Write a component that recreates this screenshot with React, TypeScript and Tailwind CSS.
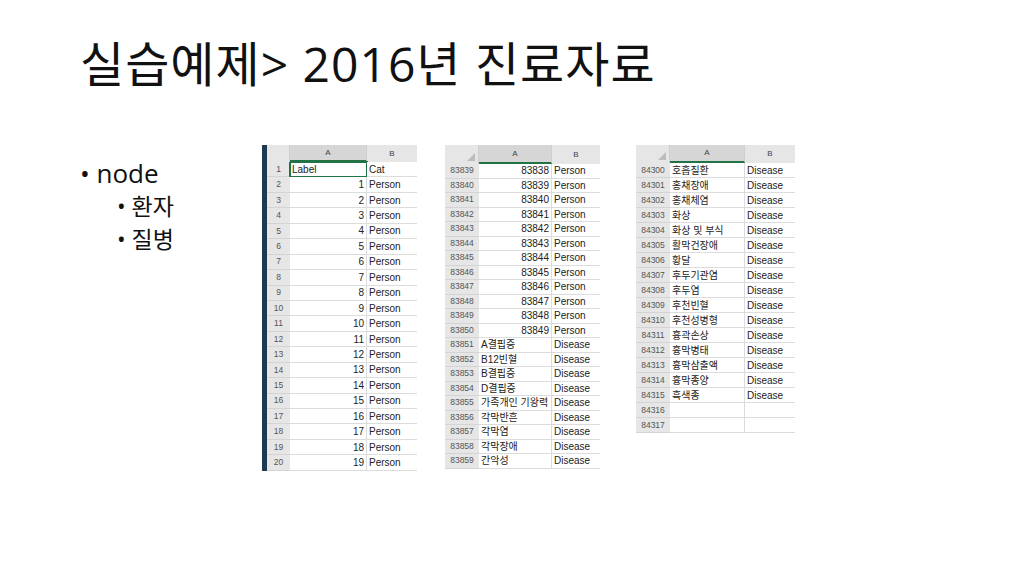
const font = { fontFamily: '"Open Sans", "Noto Sans CJK KR", sans-serif' };

type Row = [string, string, string];

function Sheet({
  rows, wNum, wA, wB, rowH, headH, bar = false, alignA = "right", corner = true, hlFirst = false,
}: {
  rows: Row[]; wNum: number; wA: number; wB: number; rowH: number; headH: number;
  bar?: boolean; alignA?: "right" | "left"; corner?: boolean; hlFirst?: boolean;
}) {
  return (
    <div className="flex" style={{ fontFamily: '"Liberation Sans", "Noto Sans CJK KR", sans-serif' }}>
      {bar && <div className="w-[5px] bg-[#1e3a52]" />}
      <div className="flex flex-col">
        <div className="flex bg-[#e6e6e6] text-[8px] text-[#444]" style={{ height: headH }}>
          <div className="relative border-r border-[#cfcfcf]" style={{ width: wNum }}>
            {corner && (
              <div className="absolute right-[3px] bottom-[3px] w-0 h-0 border-l-[8px] border-l-transparent border-b-[8px] border-b-[#bdbdbd]" />
            )}
          </div>
          <div className="flex items-center justify-center bg-[#d6d6d6] border-b-2 border-[#217346] border-r border-r-[#cfcfcf]" style={{ width: wA }}>A</div>
          <div className="flex items-center justify-center" style={{ width: wB }}>B</div>
        </div>
        {rows.map((r, i) => (
          <div key={i} className="flex text-[10px] text-[#222]" style={{ height: rowH }}>
            <div className="flex items-center justify-center bg-[#e6e6e6] text-[8.5px] text-[#555] border-b border-[#d4d4d4]" style={{ width: wNum }}>{r[0]}</div>
            <div
              className={`flex items-center px-[2px] border-b border-r border-[#dcdcdc] bg-white whitespace-nowrap ${alignA === "right" && /^\d+$/.test(r[1]) ? "justify-end" : "justify-start"} ${hlFirst && i === 0 ? "outline-2 outline-[#217346] -outline-offset-1" : ""}`}
              style={{ width: wA }}
            >{r[1]}</div>
            <div className="flex items-center px-[2px] border-b border-[#dcdcdc] bg-white" style={{ width: wB }}>{r[2]}</div>
          </div>
        ))}
      </div>
    </div>
  );
}

const s1: Row[] = [["1", "Label", "Cat"], ...Array.from({ length: 19 }, (_, i) => [String(i + 2), String(i + 1), "Person"] as Row)];
const s2: Row[] = [
  ...Array.from({ length: 12 }, (_, i) => [String(83839 + i), String(83838 + i), "Person"] as Row),
  ["83851", "A결핍증", "Disease"], ["83852", "B12빈혈", "Disease"], ["83853", "B결핍증", "Disease"],
  ["83854", "D결핍증", "Disease"], ["83855", "가족개인 기왕력", "Disease"], ["83856", "각막반흔", "Disease"],
  ["83857", "각막염", "Disease"], ["83858", "각막장애", "Disease"], ["83859", "간악성", "Disease"],
];
const names3 = ["호흡질환", "홍채장애", "홍채체염", "화상", "화상 및 부식", "활막건장애", "황달", "후두기관염", "후두염", "후천빈혈", "후천성병형", "흉곽손상", "흉막병태", "흉막삼출액", "흉막종양", "흑색종"];
const s3: Row[] = [
  ...names3.map((n, i) => [String(84300 + i), n, "Disease"] as Row),
  ["84316", "", ""], ["84317", "", ""],
];

export default function App() {
  return (
    <div className="w-[1024px] h-[576px] bg-white relative overflow-hidden" style={font}>
      <h1 className="absolute left-[80px] top-[40px] text-[48px] text-[#111] leading-none tracking-[1px]">실습예제&gt; 2016년 진료자료</h1>
      <div className="absolute left-[80px] top-[156px] text-[#111]">
        <div className="text-[26px] leading-[34px]">• node</div>
        <div className="pl-[37px] text-[23px] leading-[33px]">
          <div>• 환자</div>
          <div>• 질병</div>
        </div>
      </div>
      <div className="absolute left-[262px] top-[145px] flex items-start">
        <Sheet rows={s1} wNum={23} wA={77} wB={50} rowH={15.45} headH={17} bar corner={false} hlFirst />
        <div className="ml-[28px]">
          <Sheet rows={s2} wNum={34} wA={73} wB={48} rowH={14.5} headH={19} />
        </div>
        <div className="ml-[36px]">
          <Sheet rows={s3} wNum={34} wA={75} wB={50} rowH={15} headH={18} alignA="left" />
        </div>
      </div>
    </div>
  );
}
